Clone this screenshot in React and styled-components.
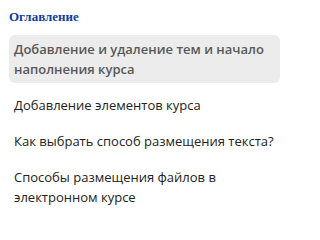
import styled, { createGlobalStyle } from 'styled-components'

const GlobalStyle = createGlobalStyle`
  body {
    margin: 0;
    background: #ffffff;
  }
`

const Nav = styled.nav`
  display: flex;
  flex-direction: column;
  width: 271px;
  padding: 10px 0 0 9px;
`

const Title = styled.h2`
  margin: 0 0 11px;
  font-family: "Liberation Serif", "DejaVu Serif", serif;
  font-size: 13px;
  font-weight: 700;
  line-height: 14px;
  color: #123c9c;
`

const List = styled.ul`
  display: flex;
  flex-direction: column;
  gap: 8px;
  margin: 0;
  padding: 0;
  list-style: none;
`

const Item = styled.li`
  padding: 4px 5px;
  border-radius: 6px;
  font-family: "Open Sans", "Noto Sans", sans-serif;
  font-size: 13px;
  line-height: 20px;
  font-weight: ${props => props.active ? 600 : 400};
  color: ${props => props.active ? '#585858' : '#222222'};
  background: ${props => props.active ? '#ececec' : 'transparent'};
`

const chapters = [
  'Добавление и удаление тем и начало наполнения курса',
  'Добавление элементов курса',
  'Как выбрать способ размещения текста?',
  'Способы размещения файлов в электронном курсе',
]

const App = () => {
  return (
    <>
      <GlobalStyle />
      <Nav>
        <Title>Оглавление</Title>
        <List>
          {chapters.map((chapter, i) => (
            <Item key={chapter} active={i === 0}>{chapter}</Item>
          ))}
        </List>
      </Nav>
    </>
  )
}

export default App
